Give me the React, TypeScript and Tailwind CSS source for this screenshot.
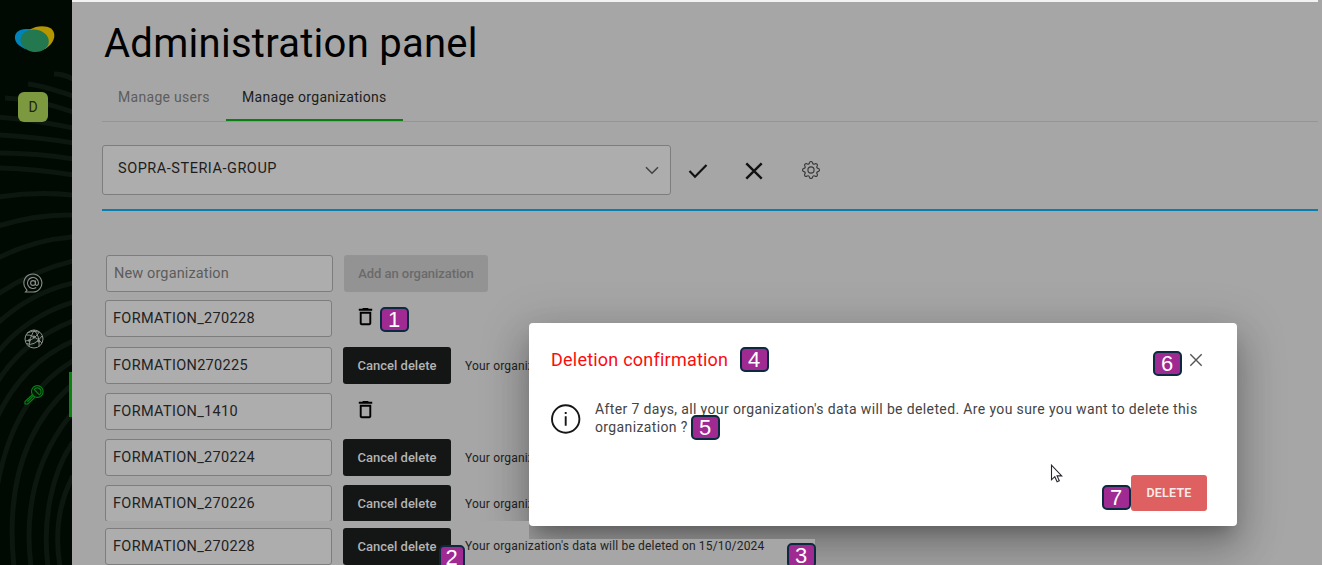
import type { ReactNode } from 'react';
import { BsGear } from 'react-icons/bs';
import { MdDeleteOutline } from 'react-icons/md';

type Org = { name: string; pending: boolean; height: string };

const orgs: Org[] = [
  { name: 'FORMATION_270228', pending: false, height: 'h-[47px]' },
  { name: 'FORMATION270225', pending: true, height: 'h-[46px]' },
  { name: 'FORMATION_1410', pending: false, height: 'h-[46px]' },
  { name: 'FORMATION_270224', pending: true, height: 'h-[46px]' },
];

const arcs = [
  'M54 74Q64 74 73 79',
  'M28 84Q44 86 73 96',
  'M5 98Q36 99 73 112',
  'M-2 117Q36 120 73 128',
  'M-2 135Q36 137 73 143',
  'M-2 153Q36 153 73 159',
  'M-2 168Q36 169 73 175',
  'M-2 197Q36 191 73 195',
  'M-2 226Q36 214 73 215',
  'M-2 258Q34 240 73 237',
  'M-2 294Q32 271 73 261',
  'M-2 323Q30 293 73 283',
  'M-2 352Q26 317 73 302',
  'M-2 381Q24 340 73 321',
  'M-2 416Q22 364 73 341',
  'M-2 483Q14 396 73 361',
  'M14 567C7 500 18 431 73 384',
  'M31 567C24 510 36 456 73 412',
  'M48 567C42 520 52 472 73 442',
  'M60 567C54 530 60 500 73 476',
];

function Badge({ n, className }: { n: number; className: string }) {
  return (
    <span
      className={`absolute z-30 flex h-[25px] items-center justify-center rounded-[5px] border-2 border-[#0c2a3f] bg-[#9e2a92] pr-px font-['Liberation_Sans',sans-serif] text-[22px] leading-none text-white ${className}`}
    >
      {n}
    </span>
  );
}

function Field({ children, className = '' }: { children: ReactNode; className?: string }) {
  return (
    <div
      className={`flex h-[37px] w-[227px] shrink-0 items-center rounded-[3px] border border-[#7d7d7d] bg-[#adadad] pl-[7px] text-[14.5px] ${className}`}
    >
      {children}
    </div>
  );
}

function CancelButton({ className = '' }: { className?: string }) {
  return (
    <button
      className={`h-[37px] w-[108px] shrink-0 rounded-[3px] bg-[#131615] text-[13px] font-medium text-[#b3b3b3] ${className}`}
    >
      Cancel delete
    </button>
  );
}

function OrgRow({ org }: { org: Org }) {
  return (
    <div className={`flex items-start ${org.height}`}>
      <Field className="tracking-[0.33px] text-[#222]">{org.name}</Field>
      {org.pending ? (
        <div className="flex h-[37px] items-center">
          <CancelButton className="ml-[11px]" />
          <span className="ml-[14px] text-[12px] tracking-[0.17px] whitespace-nowrap text-[#222]">
            Your organiz
          </span>
        </div>
      ) : (
        <MdDeleteOutline className="mt-[5px] ml-[22px] size-[23px] text-black" />
      )}
    </div>
  );
}

function Sidebar() {
  return (
    <aside className="relative flex h-full w-[72px] shrink-0 flex-col items-center bg-[#000a02]">
      <svg className="absolute inset-0" width="72" height="565" fill="none" stroke="#0c170f" strokeWidth="5">
        {arcs.map((d) => (
          <path key={d} d={d} />
        ))}
      </svg>
      <svg className="relative mt-[25px] mr-[3px] shrink-0" width="42" height="29" viewBox="0 0 42 29">
        <path d="M1 11C2 5 9 3.500 17 4l8 3-14 17C5 21 0 17 1 11Z" fill="#0083b8" />
        <path d="M16 4.500C22 .5 32 0 37 3.500c7 6 2 16-6 20.500L18 12Z" fill="#b59600" />
        <ellipse cx="20.700" cy="15.800" rx="14.200" ry="11.200" fill="#24784f" transform="rotate(8 20.7 15.8)" />
      </svg>
      <div className="relative mt-[38px] mr-[6px] flex size-[30px] shrink-0 items-center justify-center rounded-[6px] bg-[#7c993f] text-[14px] text-[#1d2410]">
        D
      </div>
      <svg className="relative mt-[151px] mr-[6px] shrink-0" width="20" height="20" viewBox="0 0 20 20" fill="none" stroke="#8b8f8c" strokeWidth="1.1">
        <path d="M2.5 19H10a9 9 0 1 0-7.4-3.700L4 17.300Z" />
        <circle cx="10" cy="10" r="2.4" />
        <path d="M12.5 7.500V11c0 2.200 3 1.900 3-1a5.500 5.500 0 1 0-2.300 4.500" />
      </svg>
      <svg className="relative mt-[36px] mr-[5px] shrink-0" width="20" height="20" viewBox="0 0 20 20" fill="none" stroke="#8b8f8c" strokeWidth="1">
        <circle cx="10" cy="10" r="9" />
        <path d="M2 6Q9 5 18 14M1.5 12Q9 12 15.5 3M5 17.5Q5 10 10 1Q16 7 15 17.5M3 4Q8 1 15 3M2.5 14.5Q10 18 18 7" />
        <circle cx="10" cy="8" r="1.1" fill="#8b8f8c" />
        <circle cx="5.3" cy="11.5" r="1" fill="#8b8f8c" />
        <circle cx="14.7" cy="12" r="1" fill="#8b8f8c" />
      </svg>
      <svg className="relative mt-[36px] mr-[5px] shrink-0" width="20" height="20" viewBox="0 0 20 20" fill="none" stroke="#0a7d16" strokeWidth="1.2">
        <circle cx="13.3" cy="6.5" r="5.8" />
        <path d="M10.2 4.5a3.8 3.8 0 1 1 5.3 5.3ZM10.2 4.5l5.3 5.3M8.4 9.7L1 16.5V19h2.8l7-6.6M3.3 16.8l6.2-5.9" />
      </svg>
      <div className="absolute top-[372px] right-0 h-[45px] w-[3px] bg-[#09850f]" />
    </aside>
  );
}

function Modal() {
  return (
    <section className="absolute top-[323px] left-[529px] z-10 flex h-[203px] w-[708px] flex-col rounded-[4px] bg-white shadow-[0_11px_15px_-7px_rgba(0,0,0,0.25),0_24px_38px_3px_rgba(0,0,0,0.17),0_9px_46px_8px_rgba(0,0,0,0.15)]">
      <header className="flex h-[73px] items-center justify-between pr-[34px] pl-[22px]">
        <h2 className="text-[18px] tracking-[0.22px] text-[#fb0d0d]">Deletion confirmation</h2>
        <svg width="14" height="14" viewBox="0 0 14 14" stroke="#555" strokeWidth="1.4">
          <path d="M1.3 1.3l11.4 11.4M12.7 1.3L1.3 12.7" />
        </svg>
      </header>
      <div className="flex h-[79px] items-start pl-[22px]">
        <svg className="mt-[8px] shrink-0" width="30" height="30" viewBox="0 0 30 30">
          <circle cx="14.7" cy="15" r="13.7" fill="none" stroke="#161616" strokeWidth="1.9" />
          <path d="M14.7 12.2v9.6M14.7 8v2.1" stroke="#161616" strokeWidth="1.9" />
        </svg>
        <p className="mt-[4px] ml-[14px] text-[14px] leading-[18px] tracking-[0.37px] whitespace-nowrap text-[#444]">
          After 7 days, all your organization's data will be deleted. Are you sure you want to delete this
          <br />
          organization ?
        </p>
      </div>
      <div className="flex justify-end pr-[30px]">
        <button className="h-[36px] w-[76px] rounded-[3px] bg-[#de6060] text-[12.5px] font-semibold tracking-[0.2px] text-[#fbe9e9]">
          DELETE
        </button>
      </div>
    </section>
  );
}

export default function App() {
  return (
    <div className="relative flex h-[565px] w-[1322px] overflow-hidden bg-[#a6a6a6] font-['Roboto',sans-serif] text-[#1c1c1c]">
      <Sidebar />
      <main className="flex min-w-0 flex-1 flex-col">
        <div className="mr-[4px] h-[2px] shrink-0 bg-[#f2f2f2]" />
        <div className="flex flex-col pr-[4px] pl-[30px]">
          <h1 className="mt-[16px] ml-[2px] h-[52px] text-[40px] leading-[52px] tracking-[0.27px] text-black">
            Administration panel
          </h1>
          <nav className="flex h-[52px] border-b border-[#959595] text-[14px] leading-[54px]">
            <span className="w-[124px] pl-[16px] tracking-[0.3px] text-[#5d5d5d]">Manage users</span>
            <span className="h-[51px] w-[177px] border-b-2 border-[#087f10] pl-[16px] tracking-[0.3px]">
              Manage organizations
            </span>
          </nav>
          <div className="mt-[23px] flex h-[50px] items-center">
            <div className="flex h-[50px] w-[569px] items-center justify-between rounded-[3px] border border-[#7d7d7d] bg-[#adadad] pr-[11px] pl-[15px] text-[14.5px]">
              <span className="pb-[3px] tracking-[0.53px]">SOPRA-STERIA-GROUP</span>
              <svg width="14" height="9" viewBox="0 0 14 9" fill="none" stroke="#444" strokeWidth="1.6">
                <path d="M1 1.2l6 6 6-6" />
              </svg>
            </div>
            <svg className="mt-[2px] ml-[17px]" width="20" height="16" viewBox="0 0 20 16" fill="none" stroke="#111" strokeWidth="2.2">
              <path d="M1.5 8l5.5 5.7L18.5 2" />
            </svg>
            <svg className="mt-[2px] ml-[37px]" width="18" height="18" viewBox="0 0 18 18" stroke="#111" strokeWidth="2.4">
              <path d="M1.3 1.3l15.4 15.4M16.7 1.3L1.3 16.7" />
            </svg>
            <BsGear className="ml-[39px] size-[18px] text-[#383838]" />
          </div>
          <div className="mt-[14px] h-[2px] bg-[#087eb0]" />
          <div className="mt-[44px] flex h-[45px] items-start pl-[4px]">
            <Field className="tracking-[0.13px] text-[#5c5c5c]">New organization</Field>
            <button className="ml-[11px] h-[37px] w-[144px] rounded-[3px] bg-[#939393] text-[13px] font-medium tracking-[-0.06px] text-[#6a6a6a]">
              Add an organization
            </button>
          </div>
          <div className="flex flex-col pl-[3px]">
            {orgs.map((org) => (
              <OrgRow key={org.name + org.height} org={org} />
            ))}
            <div className="h-[36px] overflow-hidden">
              <OrgRow org={{ name: 'FORMATION_270226', pending: true, height: 'h-[37px]' }} />
            </div>
          </div>
        </div>
        <div className="relative z-20 flex h-[44px] shrink-0 items-start">
          <div className="flex h-[44px] w-[457px] bg-[#a6a6a6] pt-[7px] pl-[33px]">
            <Field className="tracking-[0.33px] text-[#222]">FORMATION_270228</Field>
            <CancelButton className="ml-[11px]" />
          </div>
          <div className="mt-[18px] -ml-[64px] h-[26px] w-[350px] bg-[#a6a6a6] text-[12px] leading-[15px] tracking-[0.17px] text-[#222]">
            Your organization's data will be deleted on 15/10/2024
          </div>
        </div>
      </main>
      <Modal />
      <Badge n={1} className="top-[307px] left-[380px] w-[29px]" />
      <Badge n={2} className="top-[545px] left-[439px] w-[26px]" />
      <Badge n={3} className="top-[543px] left-[787px] w-[29px]" />
      <Badge n={4} className="top-[347px] left-[740px] w-[29px]" />
      <Badge n={5} className="top-[415px] left-[691px] w-[29px]" />
      <Badge n={6} className="top-[351px] left-[1153px] w-[29px]" />
      <Badge n={7} className="top-[485px] left-[1102px] w-[29px]" />
      <svg className="absolute top-[464px] left-[1050px] z-30" width="14" height="20" viewBox="0 0 14 20" fill="#fff" stroke="#25252f" strokeWidth="1.1">
        <path d="M1.5 1.2v14.6l3.3-3.1 2.3 5 2.2-1-2.2-4.8h4.6Z" />
      </svg>
    </div>
  );
}
